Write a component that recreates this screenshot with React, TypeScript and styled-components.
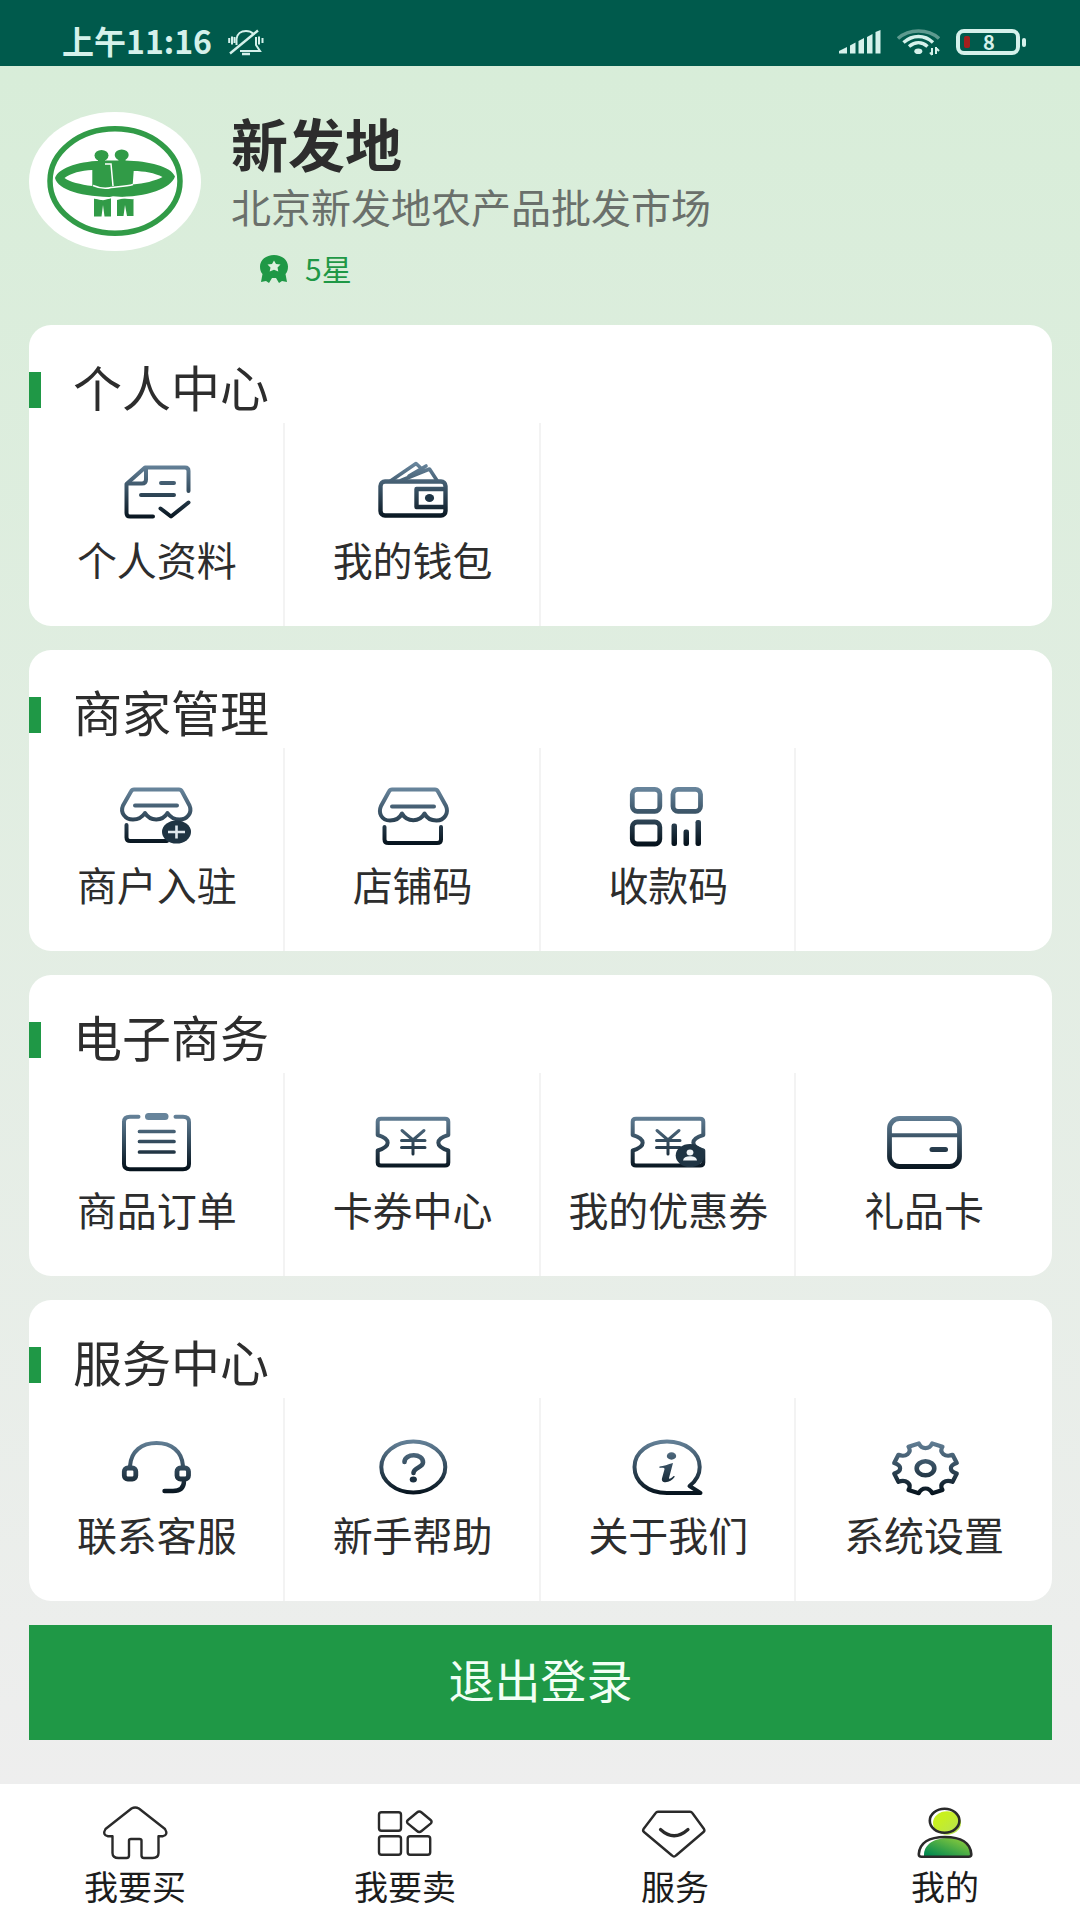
import React from 'react';
import styled, { createGlobalStyle } from 'styled-components';

const GREEN = '#1f9846';
const INK = '#2d2d2d';
const STATUS_INK = '#d5f1eb';

const GlobalStyle = createGlobalStyle`
  *, *::before, *::after { box-sizing: border-box; }
  body {
    margin: 0;
    font-family: "Noto Sans CJK SC", "Noto Sans", sans-serif;
    color: ${INK};
  }
  button { font: inherit; color: inherit; border: 0; padding: 0; background: none; cursor: pointer; }
  a { color: inherit; text-decoration: none; }
  h1, h2, p { margin: 0; font-weight: 400; }
  svg { display: block; flex: none; }
`;

const Page = styled.div`
  display: flex;
  flex-direction: column;
  min-height: 100vh;
  background: linear-gradient(#d7edd8, #eeeeee 93%);
`;

const StatusBar = styled.header`
  display: flex;
  align-items: center;
  gap: 16px;
  height: 66px;
  padding: 18px 54px 0 62px;
  background: #005a4c;
  color: ${STATUS_INK};
`;

const Clock = styled.span`
  padding-bottom: 4px;
  font-size: 32px;
  line-height: 44px;
  font-weight: 700;
`;

const Spacer = styled.span`
  flex: 1;
`;

const Content = styled.main`
  flex: 1;
  display: flex;
  flex-direction: column;
  gap: 24px;
  padding: 46px 28px 44px 29px;
`;

const Profile = styled.section`
  display: flex;
  align-items: flex-start;
  gap: 30px;
  padding-bottom: 13px;
`;

const ProfileText = styled.div`
  display: flex;
  flex-direction: column;
  gap: 10px;
`;

const Name = styled.h1`
  && { font-weight: 700; }
  font-size: 57px;
  line-height: 60px;
`;

const Company = styled.p`
  font-size: 40px;
  line-height: 48px;
  color: #6a706b;
`;

const Rating = styled.p`
  display: flex;
  align-items: center;
  gap: 16px;
  padding: 8px 0 0 28px;
  font-size: 30px;
  line-height: 40px;
  color: ${GREEN};
`;

const Card = styled.section`
  overflow: hidden;
  border-radius: 22px;
  background: #fff;
`;

const CardTitle = styled.h2`
  display: flex;
  align-items: center;
  gap: 32px;
  height: 98px;
  padding-top: 24px;
  font-size: 49px;
  line-height: 64px;

  &::before {
    content: "";
    width: 12px;
    height: 36px;
    margin-top: 8px;
    background: ${GREEN};
  }
`;

const Grid = styled.div`
  display: grid;
  grid-template-columns: repeat(4, 1fr);
`;

const Item = styled.button`
  display: flex;
  flex-direction: column;
  align-items: center;
  gap: 12px;
  padding: 36px 0 43px;
  font-size: 40px;
  line-height: 48px;
  white-space: nowrap;

  &:not(:nth-child(4n)) { box-shadow: inset -2px 0 #f3f3f3; }
`;

const Logout = styled.button`
  && {
    height: 115px;
    padding-bottom: 10px;
    background: ${GREEN};
    color: #f2fff5;
    font-size: 46px;
    line-height: 64px;
  }
`;

const TabBar = styled.nav`
  display: grid;
  grid-template-columns: repeat(4, 1fr);
  padding: 20px 0 14px;
  background: #fff;
`;

const Tab = styled.a`
  display: flex;
  flex-direction: column;
  align-items: center;
  font-size: 34px;
  line-height: 40px;
  color: #1c1c1c;
`;

const Glyph = ({ children }: { children: React.ReactNode }) => (
  <svg
    width="80"
    height="64"
    viewBox="0 0 80 64"
    fill="none"
    stroke="url(#steel)"
    strokeWidth="4"
    strokeLinecap="round"
    strokeLinejoin="round"
    aria-hidden="true"
  >
    {children}
  </svg>
);

const SteelGradient = () => (
  <svg width="0" height="0" style={{ position: 'absolute' }} aria-hidden="true">
    <defs>
      <linearGradient id="steel" gradientUnits="userSpaceOnUse" x1="0" y1="5" x2="0" y2="60">
        <stop offset="0" stopColor="#67849b" />
        <stop offset="0.5" stopColor="#344c5e" />
        <stop offset="1" stopColor="#06131d" />
      </linearGradient>
    </defs>
  </svg>
);

const ProfileIcon = () => (
  <Glyph>
    <path d="M36 57.5H13q-3.500 0-3.500-3.500V25L28 8.500h40q3.500 0 3.500 3.500v20" />
    <path d="M11 24.500h14q4 0 4-4V9M44 24h13M24 36h33M43.500 49.500l10.500 8 17.500-14" />
  </Glyph>
);

const WalletIcon = () => (
  <Glyph>
    <rect x="7.500" y="22.500" width="65" height="34" rx="4.500" strokeWidth="4.400" />
    <path d="M72 30H43.500v18H72" strokeWidth="4.400" />
    <path d="M17.500 22L43 4.500l7.500 7M28 21.500L56.500 10 64 21.500M36 17l17-10" strokeWidth="3.600" />
    <ellipse cx="56.500" cy="39" rx="4.600" ry="4" fill="#1f3546" stroke="none" />
  </Glyph>
);

const ShopJoinIcon = () => (
  <Glyph>
    <path d="M17 5.500h45q2 0 3 2l7.500 14c3 7-2 14-10 14-5 0-9-2-12-6.500-5 8.500-17.500 8.500-22.500 0-3 4.500-7 6.500-12 6.500-8 0-13-7-10-14l8-14q1-2 3-2z" />
    <path d="M18 21.500h42M9.500 41v12.500q0 3.500 4 3.500H50" />
    <ellipse cx="59.500" cy="48" rx="14.500" ry="11.500" fill="#1f3443" stroke="none" />
    <path d="M51 48h17M59.500 41.500v13" stroke="#dfe8ee" strokeWidth="2.600" strokeLinecap="butt" />
  </Glyph>
);

const ShopIcon = () => (
  <Glyph>
    <path d="M19 5.500h43q2 0 3 2l8 14.500c3 7-1.500 14.500-9.500 14.500-5 0-9.500-2-12-7-5 9-17.500 9-22.500 0-2.500 5-7 7-12 7C8.500 36.500 5 29 8 22l8-14.500q1-2 3-2z" />
    <path d="M19 22.500h42M11.500 43v12.500q0 3.500 4 3.500H64q4 0 4-3.500V43" />
  </Glyph>
);

const QrIcon = () => (
  <Glyph>
    <g strokeWidth="4.800">
      <rect x="4.300" y="5.300" width="27.500" height="22" rx="5" />
      <rect x="45" y="5.300" width="27.500" height="22" rx="5" />
      <rect x="4.300" y="38" width="27.500" height="22" rx="5" />
    </g>
    <g fill="url(#steel)" stroke="none">
      <rect x="43.500" y="39.500" width="5.500" height="22.500" rx="2.200" />
      <rect x="55.500" y="45.500" width="5.500" height="16.500" rx="2.200" />
      <rect x="67.500" y="36" width="5.500" height="26" rx="2.200" />
    </g>
  </Glyph>
);

const OrderIcon = () => (
  <Glyph>
    <path d="M21.500 7.700H13Q7 7.700 7 13v42q0 5.300 6 5.300h53q6 0 6-5.300V13q0-5.300-6-5.300h-7.500" />
    <rect x="28" y="4" width="23.500" height="7" rx="3.500" fill="#67849b" stroke="none" />
    <path d="M22.500 22.500H57M22.500 32.500H57M22.500 43H57" strokeWidth="3.700" />
  </Glyph>
);

const CouponShape = () => (
  <>
    <path d="M8 9.700h64q3.300 0 3.300 3V26C62 30 62 37.500 75.300 41.500v12q0 3-3.300 3H8q-3.300 0-3.300-3v-12C18 37.500 18 30 4.700 26V12.700q0-3 3.300-3z" />
    <path d="M29 21.500L40 31l11-9.500M28.500 31.500h23.500M28.500 38.500h23.500M40 31v14" strokeWidth="3" />
  </>
);

const CouponIcon = () => (
  <Glyph>
    <CouponShape />
  </Glyph>
);

const MyCouponIcon = () => (
  <Glyph>
    <CouponShape />
    <ellipse cx="62" cy="46.500" rx="14.300" ry="11.500" fill="#1f3443" stroke="none" />
    <g fill="#f3f6f8" stroke="none">
      <ellipse cx="62" cy="43.500" rx="3.400" ry="3" />
      <path d="M55 51.500c.5-3 3-4.200 7-4.200s6.500 1.200 7 4.200z" />
    </g>
  </Glyph>
);

const GiftCardIcon = () => (
  <Glyph>
    <rect x="5.500" y="9.500" width="70" height="48" rx="10" strokeWidth="4.800" />
    <path d="M7 26.300h67" />
    <path d="M48 40.500h13.500" strokeWidth="5" />
  </Glyph>
);

const HeadsetIcon = () => (
  <Glyph>
    <path d="M13 32C14 17 25 9 39.500 9S65 17 66 32" />
    <rect x="7.300" y="34" width="11.500" height="11" rx="3.500" strokeWidth="4.800" />
    <rect x="60" y="34" width="11.500" height="11" rx="3.500" strokeWidth="4.800" />
    <path d="M67 47q0 10-11 10H47.500" strokeWidth="4.400" />
  </Glyph>
);

const HelpIcon = () => (
  <Glyph>
    <ellipse cx="40.300" cy="33" rx="32" ry="25.500" />
    <path d="M31.500 28c0-9 19-9 18.500.5 0 5-9.500 5-9.500 10.500" strokeWidth="4.600" />
    <ellipse cx="40.300" cy="45.500" rx="3.600" ry="3" fill="#1c3040" stroke="none" />
  </Glyph>
);

const AboutIcon = () => (
  <Glyph>
    <path d="M61.500 52C68 47 71.700 40.500 71.700 33 71.700 18 57 7.500 39 7.500S6.500 18 6.500 33 20 59 39 59h33.500z" />
    <g fill="url(#steel)" stroke="none">
      <ellipse cx="43.500" cy="22" rx="4.700" ry="3.700" />
      <path d="M31.500 32.500c4-.5 8.500-2 13.500-3.500l-4 15c-.3 1.500 2 .8 4.500-2l1.500.6c-3 4-6.500 6-10.500 5.600-2.500-.4-3-2.200-2.500-4l2.500-9c.4-1.500-2-1.600-5-1.300z" />
    </g>
  </Glyph>
);

const gearPath = (() => {
  const at = (deg: number, r: number) => {
    const a = (deg * Math.PI) / 180;
    return `${(41.5 + 32 * r * Math.sin(a)).toFixed(1)} ${(34.3 - 25.5 * r * Math.cos(a)).toFixed(1)}`;
  };
  let d = `M${at(-12, 1)}`;
  for (let q = 0; q < 360; q += 90) {
    d += `C${at(q - 9, 0.74)} ${at(q + 9, 0.74)} ${at(q + 12, 1)}L${at(q + 32, 1)}`;
    d += `C${at(q + 34, 0.74)} ${at(q + 56, 0.74)} ${at(q + 58, 1)}L${at(q + 78, 1)}`;
  }
  return `${d}Z`;
})();

const SettingsIcon = () => (
  <Glyph>
    <path d={gearPath} strokeWidth="4.200" />
    <ellipse cx="41.500" cy="34.300" rx="8.800" ry="7" strokeWidth="4.600" />
  </Glyph>
);

const TabGlyph = ({ children }: { children: React.ReactNode }) => (
  <svg
    width="72"
    height="62"
    viewBox="0 0 72 62"
    fill="none"
    stroke="#2a2a2a"
    strokeWidth="2.400"
    strokeLinecap="round"
    strokeLinejoin="round"
    aria-hidden="true"
  >
    {children}
  </svg>
);

const HomeIcon = () => (
  <TabGlyph>
    <path d="M32.500 4.500q3.700-2 7.400 0L66 25q3.500 6-2 7.200h-4.500V49q0 5-6 5H45q-2.500 0-2.500-2.500v-15q0-1.500-2-1.500H32q-2 0-2 1.500v15Q30 54 27.500 54h-8q-6 0-6-5V32.200H9Q3 31 6.500 25z" />
  </TabGlyph>
);

const SellIcon = () => (
  <TabGlyph>
    <rect x="10" y="8.300" width="22" height="18.500" rx="2.500" />
    <rect x="10" y="32.200" width="22" height="18.500" rx="2.500" />
    <rect x="38.700" y="32.200" width="22.500" height="18.500" rx="2.500" />
    <path d="M48 8.500q2.300-2 4.600 0l9 7.500q2 1.800 0 3.600l-9 7.400q-2.300 2-4.600 0l-9-7.400q-2-1.800 0-3.600z" />
  </TabGlyph>
);

const ServiceIcon = () => (
  <TabGlyph>
    <path d="M19 7.700h32q1.500 0 2.500 1.500L65 25q1 1.700-.5 3L37 51.500q-2 2-4 0L5 28q-1.500-1.300-.5-3L16.500 9.200q1-1.500 2.500-1.500z" />
    <path d="M21.500 25.500q13.500 12.500 27.500 0" strokeWidth="3.200" />
  </TabGlyph>
);

const MineIcon = () => (
  <TabGlyph>
    <defs>
      <linearGradient id="head" x1="0" y1="0" x2="1" y2="1">
        <stop offset="0.300" stopColor="#c8f020" />
        <stop offset="1" stopColor="#b4e05a" />
      </linearGradient>
      <linearGradient id="torso" x1="0" y1="1" x2="1" y2="0">
        <stop offset="0.100" stopColor="#058a4f" />
        <stop offset="0.900" stopColor="#8acb3c" />
      </linearGradient>
    </defs>
    <ellipse cx="38" cy="19" rx="14" ry="11.800" fill="url(#head)" stroke="none" />
    <path d="M15 52.500C14 40 26 34 39 34s23 6 23 18.500z" fill="url(#torso)" stroke="none" />
    <ellipse cx="35.600" cy="16.800" rx="14.800" ry="12" strokeWidth="2.600" />
    <path d="M12.500 52.700q-2.700 0-2.700-2.500C10.500 39 20 33 36 33s25.500 6 26.300 17.200q0 2.500-2.700 2.500z" strokeWidth="2.600" />
  </TabGlyph>
);

const Logo = () => (
  <svg width="172" height="139" viewBox="0 0 172 139" role="img" aria-label="新发地">
    <ellipse cx="86" cy="69.500" rx="86" ry="69.500" fill="#fff" />
    <ellipse cx="86" cy="69" rx="65" ry="52.200" fill="none" stroke="#319b47" strokeWidth="5.500" />
    <g fill="#319b47">
      <ellipse cx="72.500" cy="43.500" rx="7" ry="5.600" />
      <ellipse cx="92.700" cy="43" rx="7" ry="5.600" />
      <path d="M69 46h7v5h-7zM89.500 46h7v5h-7z" />
      <path
        fillRule="evenodd"
        d="M26 66C30 55 52 49 76 48.500h20c24 .5 46 6 50 16-4 12-27 20.500-60 20.500S29 78 26 66zM35.500 66C42 61 52 58.500 63.300 58v16C51 72.500 41 70 35.500 66zM133.500 65C126 61 115 59 104.700 59l-1 13.500C115 71.500 126 69 133.500 65z"
      />
      <path d="M65 86l8 2 9-2v18.500h-6.500L74 93l-1.500 11.500H65zM88 88l8-2 8.500 1v17H98l-2-11-1.500 11H88z" />
    </g>
    <path d="M76 52h6l2 22M64 73.500c7 3 13 3.500 18 2 8-1 15-1 22-3" fill="none" stroke="#fff" strokeWidth="1.500" />
    <path d="M63 85.500l11 2 10-2.500 20 1.500" fill="none" stroke="#fff" strokeWidth="1.500" />
  </svg>
);

const RibbonIcon = () => (
  <svg width="30" height="32" viewBox="0 0 30 32" aria-hidden="true">
    <path
      d="M15 3c8 0 14 5 14 11.500 0 3.500-1 6-2.500 7.500l1.500 8-5-1-3 2-3-5h-4l-3 5-3-2-5 1 1.500-8C2 20.500 1 18 1 14.500 1 8 7 3 15 3z"
      fill={GREEN}
    />
    <path d="M15 8.500l2 3.500 4.500.5-3 3 .8 4-4.300-1.800-4.300 1.800.8-4-3-3L13 12z" fill="#def0df" />
  </svg>
);

const MutedBell = () => (
  <svg width="36" height="28" viewBox="0 0 36 28" fill="none" stroke={STATUS_INK} strokeWidth="2" aria-hidden="true">
    <path d="M8.500 17V11C9 6 13 3 18 3c3 0 5.500 1 7.300 2.700M28 9v8l4 6H12" />
    <path d="M2 25.500L30 2.500" strokeWidth="2.400" />
    <path d="M14 26h8" strokeWidth="2.500" />
    <path d="M1.200 10v5M4 8.500v8M6.500 9v6M31 8.500v8M34.500 10v5" />
  </svg>
);

const Signal = () => (
  <svg width="42" height="26" viewBox="0 0 42 26" fill={STATUS_INK} aria-hidden="true">
    <path d="M0 22l8-4v6.500H0zM11 16.500l5.500-3v11H11zM19.500 12l5.500-3v15.500h-5.500zM28 8l5.500-3v19.500H28zM36.500 3l5-2v23.500h-5z" />
  </svg>
);

const Wifi = () => (
  <svg width="43" height="28" viewBox="0 0 43 28" fill="none" stroke={STATUS_INK} strokeWidth="3.400" aria-hidden="true">
    <path d="M1 10.500C12 .5 31 .5 42 10.500" stroke="#5d9a8f" />
    <path d="M6.500 14.500c9-8 21-8 29.500 0M12 18.500c6-5 13-5 18.500 0" />
    <ellipse cx="21.300" cy="23.300" rx="4" ry="2.800" fill={STATUS_INK} stroke="none" />
    <path d="M35 20v7M39 19v7M33 24.500l2 2.500M39 20l3 3" strokeWidth="2" />
  </svg>
);

const BatteryCase = styled.span`
  display: flex;
  align-items: center;
  gap: 2px;

  &::after {
    content: "";
    width: 4px;
    height: 9px;
    border-radius: 2px;
    background: ${STATUS_INK};
  }
`;

const BatteryBody = styled.span`
  display: flex;
  align-items: center;
  gap: 13px;
  width: 64px;
  height: 26px;
  padding-left: 4px;
  border: 4px solid ${STATUS_INK};
  border-radius: 8px;
  font-size: 20px;
  line-height: 18px;
  font-weight: 700;

  &::before {
    content: "";
    width: 6px;
    height: 12px;
    border-radius: 2px;
    background: #a3201d;
  }
`;

type Entry = { label: string; Icon: React.ComponentType };

const sections: { title: string; items: Entry[] }[] = [
  {
    title: '个人中心',
    items: [
      { label: '个人资料', Icon: ProfileIcon },
      { label: '我的钱包', Icon: WalletIcon },
    ],
  },
  {
    title: '商家管理',
    items: [
      { label: '商户入驻', Icon: ShopJoinIcon },
      { label: '店铺码', Icon: ShopIcon },
      { label: '收款码', Icon: QrIcon },
    ],
  },
  {
    title: '电子商务',
    items: [
      { label: '商品订单', Icon: OrderIcon },
      { label: '卡券中心', Icon: CouponIcon },
      { label: '我的优惠券', Icon: MyCouponIcon },
      { label: '礼品卡', Icon: GiftCardIcon },
    ],
  },
  {
    title: '服务中心',
    items: [
      { label: '联系客服', Icon: HeadsetIcon },
      { label: '新手帮助', Icon: HelpIcon },
      { label: '关于我们', Icon: AboutIcon },
      { label: '系统设置', Icon: SettingsIcon },
    ],
  },
];

const tabs: Entry[] = [
  { label: '我要买', Icon: HomeIcon },
  { label: '我要卖', Icon: SellIcon },
  { label: '服务', Icon: ServiceIcon },
  { label: '我的', Icon: MineIcon },
];

export default function App() {
  return (
    <Page lang="zh-CN">
      <GlobalStyle />
      <SteelGradient />
      <StatusBar>
        <Clock>上午11:16</Clock>
        <MutedBell />
        <Spacer />
        <Signal />
        <Wifi />
        <BatteryCase>
          <BatteryBody>8</BatteryBody>
        </BatteryCase>
      </StatusBar>

      <Content>
        <Profile>
          <Logo />
          <ProfileText>
            <Name>新发地</Name>
            <Company>北京新发地农产品批发市场</Company>
            <Rating>
              <RibbonIcon />
              5星
            </Rating>
          </ProfileText>
        </Profile>

        {sections.map(({ title, items }) => (
          <Card key={title}>
            <CardTitle>{title}</CardTitle>
            <Grid>
              {items.map(({ label, Icon }) => (
                <Item key={label} type="button">
                  <Icon />
                  {label}
                </Item>
              ))}
            </Grid>
          </Card>
        ))}

        <Logout type="button">退出登录</Logout>
      </Content>

      <TabBar>
        {tabs.map(({ label, Icon }) => (
          <Tab key={label} href="#" aria-current={label === '我的' ? 'page' : undefined}>
            <Icon />
            {label}
          </Tab>
        ))}
      </TabBar>
    </Page>
  );
}
